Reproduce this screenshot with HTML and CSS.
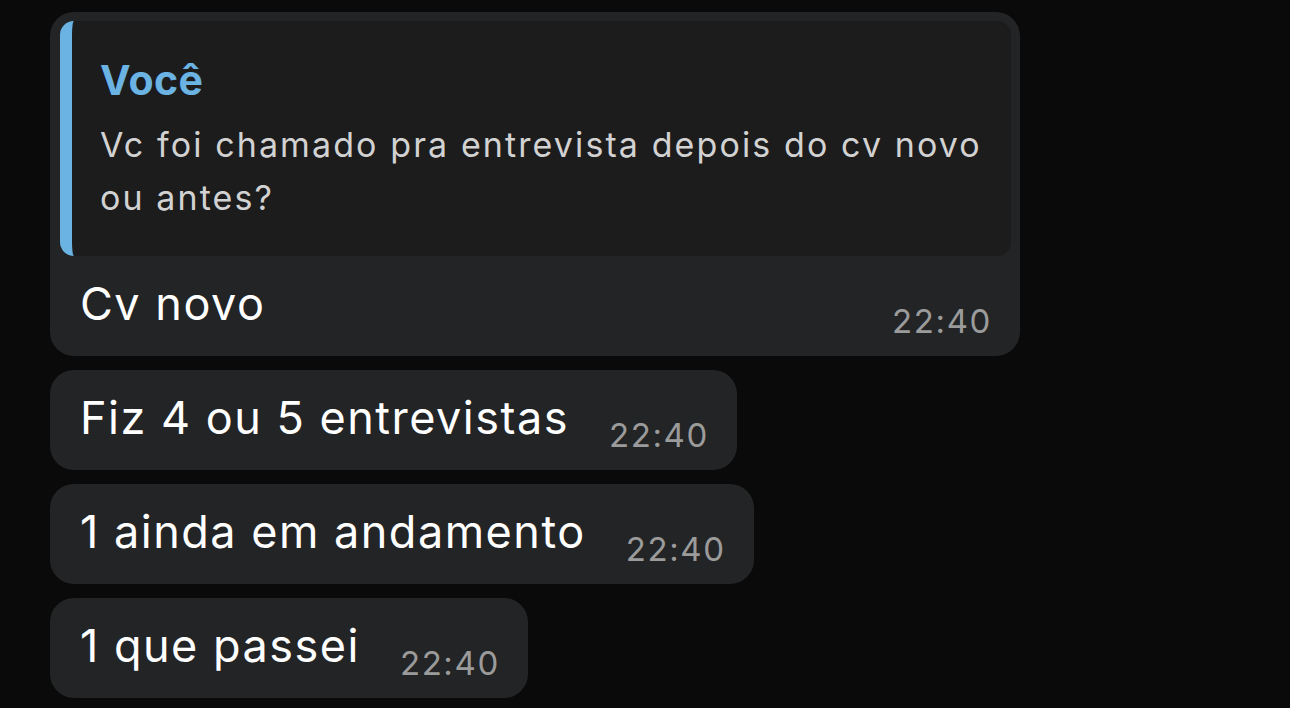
FILE: index.html
```html
<!DOCTYPE html>
<html lang="pt">
<head>
<meta charset="utf-8">
<title>Chat</title>
<link rel="stylesheet" href="styles.css">
</head>
<body>
<div class="chat">
  <div class="bubble bubble-reply">
    <div class="quote">
      <div class="quote-author">Você</div>
      <div class="quote-text">Vc foi chamado pra entrevista depois do cv novo<br>ou antes?</div>
    </div>
    <div class="row row-after-quote">
      <span class="text">Cv novo</span>
      <span class="time">22:40</span>
    </div>
  </div>
  <div class="bubble">
    <div class="row">
      <span class="text">Fiz 4 ou 5 entrevistas</span>
      <span class="time">22:40</span>
    </div>
  </div>
  <div class="bubble">
    <div class="row">
      <span class="text">1 ainda em andamento</span>
      <span class="time">22:40</span>
    </div>
  </div>
  <div class="bubble">
    <div class="row">
      <span class="text">1 que passei</span>
      <span class="time">22:40</span>
    </div>
  </div>
</div>
</body>
</html>
```
FILE: styles.css
```css
html, body {
  margin: 0;
  padding: 0;
  background: #0a0a0a;
}
body {
  font-family: Inter, "Noto Sans", sans-serif;
  width: 1290px;
  height: 708px;
  overflow: hidden;
}
.chat {
  display: flex;
  flex-direction: column;
  align-items: flex-start;
  gap: 14px;
  padding: 12px 0 0 50px;
}
.bubble {
  background: #232425;
  border-radius: 24px;
}
.bubble-reply {
  width: 970px;
  padding: 9px 9px 0 10px;
  box-sizing: border-box;
}
.quote {
  background: #1c1c1d;
  border-left: 12px solid #6ab3e2;
  border-radius: 14px;
  padding: 36px 20px 32px 28px;
}
.quote-author {
  color: #6ab3e2;
  font-weight: 700;
  font-size: 41px;
  line-height: 46px;
  letter-spacing: 0.4px;
  margin-bottom: 15px;
}
.quote-text {
  color: #d2d2d2;
  font-size: 34px;
  line-height: 53px;
  letter-spacing: 2.1px;
  white-space: nowrap;
}
.row {
  display: flex;
  align-items: flex-end;
  justify-content: space-between;
  padding: 21px 28px 15px 30px;
}
.row-after-quote {
  padding: 21px 19px 15px 20px;
}
.text {
  color: #ffffff;
  font-size: 45px;
  line-height: 54px;
  letter-spacing: 1.5px;
  margin-bottom: 10px;
  white-space: nowrap;
}
.time {
  color: #9b9b9b;
  font-size: 33px;
  line-height: 40px;
  letter-spacing: 1.6px;
  margin-left: 40px;
}
```
